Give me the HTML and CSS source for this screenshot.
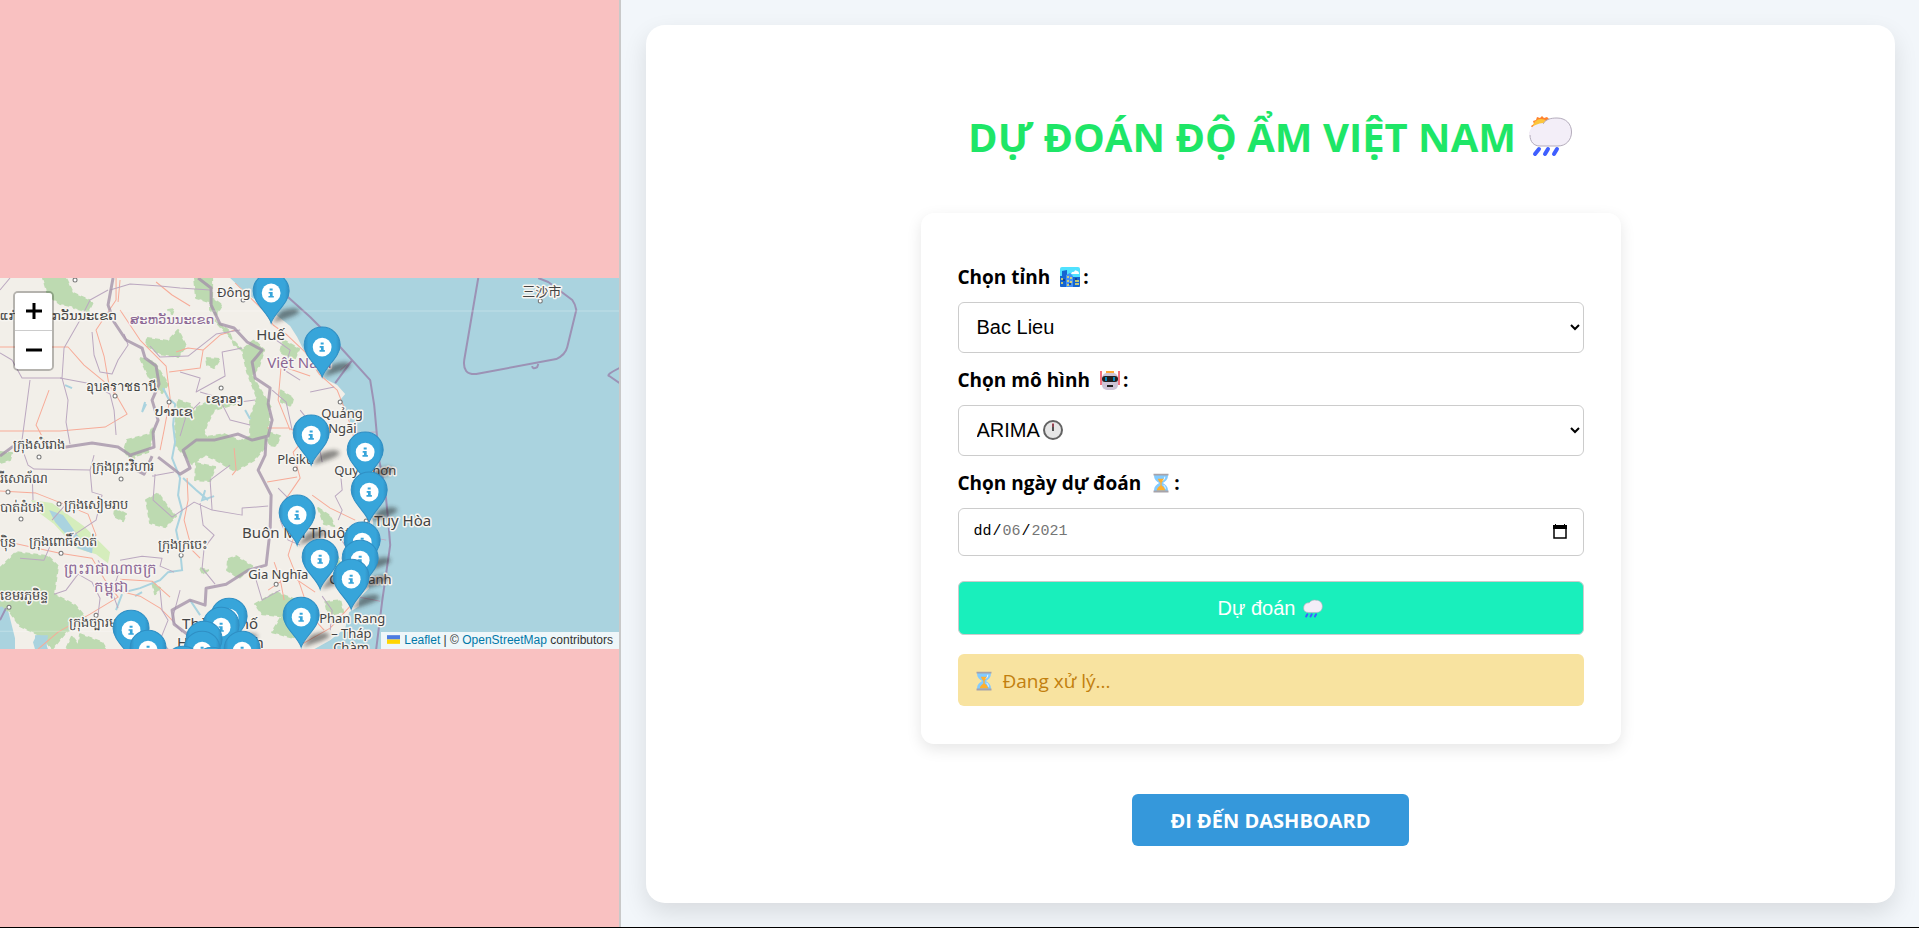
FILE: index.html
```html
<!DOCTYPE html>
<html lang="vi">
<head>
<meta charset="utf-8">
<meta name="viewport" content="width=device-width, initial-scale=1">
<title>Dự đoán độ ẩm Việt Nam</title>
<link rel="stylesheet" href="styles.css">
</head>
<body>
<svg class="sprites" aria-hidden="true">
  <defs>
    <linearGradient id="pinFill" x1="0" y1="0" x2="1" y2="0">
      <stop offset="0" stop-color="#318fc2"/><stop offset=".12" stop-color="#37a5da"/><stop offset=".88" stop-color="#37a5da"/><stop offset="1" stop-color="#318fc2"/>
    </linearGradient>
    <filter id="soft" x="-30%" y="-60%" width="160%" height="220%"><feGaussianBlur stdDeviation="2"/></filter>
    <symbol id="rain" viewBox="0 0 32 30">
      <path d="M1 14C1 8 4 5 10 5 13 1 17 0 21 1 27 1 31 5 31 11 31 17 27 20.500 22 20.500H9C4 20.500 1 18 1 14Z" fill="#f3eef8" stroke="#b4acbc" stroke-width="1"/>
      <path d="M7 23.500 5 27M14 23.500 12 27M21 23.500 19 27" stroke="#3f5fff" stroke-width="3.200" stroke-linecap="round"/>
    </symbol>
    <symbol id="hourglass" viewBox="0 0 32 32">
      <path d="M5 3h22v3c0 4-4 8-8 10 4 2 8 6 8 10v3H5v-3c0-4 4-8 8-10-4-2-8-6-8-10z" fill="#83cbff"/>
      <path d="M11 9h10c-1 3-3 5-4 6v5c3 2 5 4 6 8H9c1-4 3-6 6-8v-5c-2-1-3-3-4-6z" fill="#ffb02e"/>
      <path d="M22 6c0 3-1 4-3 6M20 19c2 2 3 4 3 6" stroke="#fff" stroke-width="1.500" fill="none"/>
      <path d="M4 1h24v3H4zM4 28h24v3H4z" fill="#a6a3aa"/>
    </symbol>
    <symbol id="pin" viewBox="-20 -22 70 56" overflow="visible">
      <path d="M1 30 10 18Q24 13 28 17T1 30Z" fill="#222" opacity=".5" filter="url(#soft)"/>
      <path d="M0 30C-3 20-18 10-18-2A18 18 0 0 1 18-2C18 10 3 20 0 30Z" fill="url(#pinFill)" stroke="#2f8fc4" stroke-width="1"/>
      <circle r="9.400" fill="#fff"/>
      <path d="M-1.500-4.500h3v2h-3zM-2.500-1h4v4h1.200v1.600h-5.400V3h1.500V.6h-1.300z" fill="#37a5da"/>
    </symbol>
  </defs>
</svg>

<div class="page">
  <section class="map-panel" aria-label="Bản đồ">
    <div class="map">
      <svg class="map-canvas" viewBox="0 278 619 371" preserveAspectRatio="xMinYMin slice" role="img" aria-label="Bản đồ Việt Nam">
        <rect y="278" width="619" height="371" fill="#aad3df"/>
        <path class="land" d="M0 278H230L248 295 262 304 280 318 290 326 297 337 305 353 317 372 327 380 337 385 345 394 340 400 347 413 354 433 357 450 366 465 367 490 373 522 371 545 365 570 369 588 359 598 359 606 349 612 345 628 330 640 314 649H48L40 628 33 642 35 649H15V638L8 610 0 600Z"/>
        <g class="forest">
          <path d="M43 278 66 278 73 293 89 300 80 308 60 304 48 295ZM78 302 93 302 88 312 74 308ZM147 338 168 341 178 330 186 346 178 357 160 354 146 345ZM194 278 212 278 212 303 196 298ZM210 297 222 305 216 315 210 310ZM212 318 228 330 234 345 242 350 254 340 264 350 259 366 252 376 264 396 271 408 257 398 247 372 242 350ZM140 358 154 362 168 384 162 393 150 380ZM178 400 190 404 202 427 212 450 192 464 176 446 175 425ZM206 358 220 359 214 368 207 365ZM258 395 268 400 269 420 266 444 250 449 250 418ZM196 408 215 398 235 404 214 410 207 424 202 437 191 425ZM200 438 224 434 240 441 260 432 265 447 254 460 235 471 216 460 190 448ZM127 440 150 434 152 427 154 432 148 452 135 456 132 463 124 450ZM0 452 12 453 10 460 0 463ZM196 463 215 467 210 481 195 480ZM146 500 158 493 170 510 176 516 165 527 150 523ZM115 508 126 514 123 521 114 516ZM228 559 236 556 252 566 239 578 227 570ZM0 568 16 552 48 556 58 566 54 594 75 605 88 620 66 632 52 649 42 636 20 626 10 612 0 605ZM80 634 102 642 106 649H78ZM255 604 276 592 296 600 304 607 280 616 262 614ZM268 432 280 436 276 446 269 445ZM276 280 285 295 277 300ZM318 508 330 516 334 526 324 524ZM336 555 342 564 338 574 332 560ZM282 615 300 620 294 638 272 632ZM325 602 340 600 343 612 328 615ZM283 340 299 349 294 360 280 352Z"/>
          <path d="M280 390 293 398 291 406 281 402ZM200 568 208 570 203 574ZM152 582 160 588 155 594ZM72 636 66 649 82 649ZM168 310 174 309 172 314ZM348 556 352 567 346 566ZM262 300 272 306 266 312Z"/>
        </g>
        <path d="M31 500 52 503 84 526 110 552 108 563 96 554 76 548 54 524 38 512Z" fill="#d5edbc"/>
        <path d="M49 510 63 515 79 537 93 545 92 553 78 548 66 534 55 522ZM35 635 48 635 46 649H35Z" fill="#aad3df"/>
        <g class="river">
          <path d="M163 388 168 398 175 404 173 425 175 442 172 458 180 478 178 495 182 510 176 530 180 550 182 570 168 572 160 580 140 588 124 592"/>
          <path d="M145 402 142 412 146 404M183 478 196 490 208 500M205 490 202 500 214 496M245 410 250 419M65 385 72 388M122 594 116 610M190 600 200 615M142 592 135 596"/>
        </g>
        <g class="road">
          <path d="M0 347H68L84 365 112 388 127 414 105 427 60 431H0M116 278 116 300 96 330 104 356 109 385 115 395M49 390 36 425 44 440M120 310 140 340 166 366 170 398 164 430 160 450"/>
          <path d="M169 372 200 368 203 350 220 335 235 330M203 350 188 348 176 352M156 282 172 295 190 306M118 302 120 280M0 491 36 493 64 504 88 514 96 535 88 543M0 540 60 553 92 558 105 580 118 597 90 614 58 632 38 649"/>
          <path d="M187 478 188 500 184 520 192 550 200 558M116 590 140 596 160 608 172 620M120 579 152 581 170 597M235 283 265 312 273 325 287 335 305 352 319 374 337 390 348 418 355 442 362 480 371 512 362 545 360 580 350 606 330 628 300 645"/>
          <path d="M267 428 289 428 306 437 293 452 300 478 285 500 296 530 288 555 300 585 310 615 324 630M290 430 278 400 281 366 310 376M267 482 297 477M234 448 236 470 232 475M274 562 280 579 284 600M268 590 290 575 315 592M312 495 330 508 355 520"/>
        </g>
        <g class="admin">
          <path d="M0 290 10 278M0 353 12 360 22 378H62L64 348 80 320 90 300 108 290M62 378 68 400 66 422 70 444M92 332 94 355 100 372 112 374 118 360 128 345 124 334M30 380 26 410 22 440M110 290 130 284 160 286 180 288 210 290M150 346 160 357 188 356 216 334 240 330"/>
          <path d="M60 378 92 384 110 394 114 410 116 435M180 372 200 378 196 392 225 376 222 352 242 348M200 402 186 416 180 436M200 392 220 398 240 402 255 400M22 448 28 465 34 469 90 470 92 492 102 495 96 520 75 534 50 546 44 560 20 558"/>
          <path d="M32 470 33 500M90 470 94 455M155 474 153 500 172 517 194 502 212 510 242 515 242 508 268 506M152 476 174 472M212 510 210 480 230 465M200 503 203 525 214 535 204 548 202 568 215 584M98 560 104 570 118 575 112 592 118 608M120 560 142 556 162 558 160 566 174 572M54 594 66 590 78 574 92 582 100 598 98 615M160 590 162 610 168 620 160 640 168 649M66 504 52 520M180 590 172 620 182 632"/>
          <path d="M250 425 230 420 222 404M276 340 290 350 284 370 300 380M272 390 286 402 292 430M310 392 334 387M340 370 352 360M300 410 316 430 322 462M340 470 342 490 335 496 342 510 338 520M278 488 290 500 300 495M280 520 288 540 300 545M335 530 348 550 372 540M256 580 262 600 280 590M322 596 332 610 330 630M355 433 376 432M370 537 386 540M360 597 380 601"/>
        </g>
        <g class="border">
          <path d="M113 278 108 305 114 322 126 340 142 348 145 358 156 366 159 384 152 400 158 420 153 432 154 447 130 455 118 447 92 443 66 447 40 444 12 447 0 456"/>
          <path d="M198 278 211 288 211 305 220 324 234 328 247 342 262 350 252 362 255 378 270 388 268 404 272 420 268 436 252 440 238 434 214 440 196 440 183 450 190 468 180 474 158 457"/>
          <path d="M266 438 265 455 258 470 271 495 270 530 266 565 248 570 226 584 206 588 205 605 190 600 172 610 174 624 190 636M130 455 136 470 144 474 152 456"/>
        </g>
        <g class="sea-border">
          <path d="M280 290 310 317 340 347 370 380 374 405 379 460 385 490 388 520 390 545 385 580 382 601 376 649M335 383 352 360M478 278 464 360Q462 375 476 374L556 359Q565 355 567 347L576 310Q575 304 572 300L548 282 538 278M532 366Q532 370 537 367L538 364M619 368Q605 375 609 376L619 383M0 620 6 608"/>
        </g>
        <path class="tile-seam" d="M0 311H619M0 631H140"/>
        <g class="dots">
          <circle cx="75" cy="280" r="2"/><circle cx="109" cy="315" r="2"/><circle cx="115" cy="396" r="2"/><circle cx="169" cy="402" r="2"/><circle cx="221" cy="388" r="2"/><circle cx="39" cy="457" r="2"/><circle cx="121" cy="479" r="2"/><circle cx="8" cy="492" r="2"/><circle cx="59" cy="504" r="2"/><circle cx="21" cy="519" r="2"/><circle cx="61" cy="553" r="2"/><circle cx="181" cy="555" r="2"/><circle cx="9" cy="607" r="2"/><circle cx="96" cy="615" r="2"/><circle cx="276" cy="584" r="2"/><circle cx="295" cy="469" r="2"/><circle cx="340" cy="402" r="2"/><circle cx="540" cy="301" r="2"/><circle cx="243" cy="300" r="2"/><circle cx="366" cy="521" r="2"/>
        </g>
        <g class="place">
          <text x="0" y="320">ແກ່</text><text x="52" y="320">ກວັນນະເຂດ</text>
          <text x="86" y="391">อุบลราชธานี</text><text x="155" y="416">ປາກເຊ</text><text x="206" y="403">ເຊກອງ</text>
          <text x="13" y="449">ក្រុងសំរោង</text><text x="92" y="471">ក្រុងព្រះវិហារ</text><text x="0" y="483">រីសោភ័ណ</text><text x="64" y="509">ក្រុងសៀមរាប</text><text x="0" y="512">បាត់ដំបង</text><text x="0" y="547">ប៉ិន</text><text x="29" y="546">ក្រុងពោធិ៍សាត់</text><text x="158" y="549">ក្រុងក្រចេះ</text><text x="0" y="600">ខេមរភូមិន្ទ</text><text x="69" y="627">ក្រុងច្បារមន</text>
          <text x="217" y="297">Đông</text><text x="321" y="418">Quảng</text><text x="328" y="433">Ngãi</text><text x="277" y="464">Pleiku</text><text x="334" y="475">Quy Nhơn</text><text x="248" y="579">Gia Nghĩa</text><text x="329" y="584">Cam Ranh</text><text x="319" y="623">Phan Rang</text><text x="331" y="638">– Tháp</text><text x="333" y="652">Chàm</text><text x="522" y="296">三沙市</text>
        </g>
        <g class="place city">
          <text x="256" y="340">Huế</text><text x="242" y="538">Buôn Ma Thuột</text><text x="374" y="526">Tuy Hòa</text><text x="182" y="629">Thành phố</text><text x="177" y="648">Hồ Chí Minh</text>
        </g>
        <g class="place region">
          <text class="province" x="130" y="324">ສະຫວັນນະເຂດ</text><text x="267" y="368">Việt Nam</text><text x="64" y="574">ព្រះរាជាណាចក្រ</text><text x="94" y="592">កម្ពុជា</text>
        </g>
        <g class="pins">
          <use href="#pin" x="251" y="271" width="70" height="56"/>
          <use href="#pin" x="302" y="325" width="70" height="56"/>
          <use href="#pin" x="291" y="413" width="70" height="56"/>
          <use href="#pin" x="345" y="430" width="70" height="56"/>
          <use href="#pin" x="349" y="470" width="70" height="56"/>
          <use href="#pin" x="277" y="493" width="70" height="56"/>
          <use href="#pin" x="342" y="520" width="70" height="56"/>
          <use href="#pin" x="300" y="537" width="70" height="56"/>
          <use href="#pin" x="340" y="538" width="70" height="56"/>
          <use href="#pin" x="331" y="557" width="70" height="56"/>
          <use href="#pin" x="281" y="595" width="70" height="56"/>
          <use href="#pin" x="209" y="596" width="70" height="56"/>
          <use href="#pin" x="201" y="605" width="70" height="56"/>
          <use href="#pin" x="111" y="608" width="70" height="56"/>
          <use href="#pin" x="184" y="619" width="70" height="56"/>
          <use href="#pin" x="128" y="628" width="70" height="56"/>
          <use href="#pin" x="222" y="629" width="70" height="56"/>
          <use href="#pin" x="182" y="629" width="70" height="56"/>
          <use href="#pin" x="163" y="644" width="70" height="56"/>
          <use href="#pin" x="192" y="645" width="70" height="56"/>
        </g>
      </svg>
      <div class="zoom">
        <button type="button" aria-label="Phóng to"><svg viewBox="0 0 16 16"><path d="M8 0V16M0 8H16"/></svg></button>
        <button type="button" aria-label="Thu nhỏ"><svg viewBox="0 0 16 16"><path d="M0 8H16"/></svg></button>
      </div>
      <p class="attribution"><svg class="flag" viewBox="0 0 12 8" aria-hidden="true"><path fill="#4c7be1" d="M0 0h12v4H0z"/><path fill="#ffd500" d="M0 4h12v4H0z"/></svg><a href="#leaflet">Leaflet</a> | © <a href="#osm">OpenStreetMap</a> contributors</p>
    </div>
  </section>

  <main class="content">
    <div class="card">
      <h1 class="title">DỰ ĐOÁN ĐỘ ẨM VIỆT NAM
        <svg class="title-icon" viewBox="0 0 44 42" aria-hidden="true">
          <path d="M2 15 4 13 2 10 5 8 4 5 7 4 8 1 11 2 13 0 15 2 18 1 20 3 20 16 5 20Z" fill="#ff822d"/>
          <circle cx="12" cy="11" r="8" fill="#fcc53b"/>
          <path d="M1 19C1 12 6 9 14 8 17 3 22 2 28 2 37 2 42.500 8 42.500 16 42.500 24 37 30 29 30H11C5 30 1 26 1 19Z" fill="#f3eef8" stroke="#b4acbc"/>
          <path d="M1 19C1 12 6 9 14 8" fill="none" stroke="#f3eef8" stroke-width="2"/>
          <path d="M10 33 6 38M19 33 16 38M28 33 25 38" stroke="#3f5fff" stroke-width="4" stroke-linecap="round"/>
        </svg>
      </h1>

      <form class="form">
        <label class="label" for="province">Chọn tỉnh
          <svg class="emoji" viewBox="0 0 20 20" aria-hidden="true">
            <rect width="20" height="20" rx="2" fill="#50e2ff"/>
            <path d="M11 7q1-3 3-2 1-3 3-1 2 0 2 3z" fill="#fff"/>
            <path d="M2 4 7 3V20H1Q0 20 0 19V9h2zM13 10h7v9q0 1-1 1h-6z" fill="#1565d0"/><path d="M6 8l4-2 3 3v11H6z" fill="#4591f5"/>
            <path d="M8 9v2M11 10v2M8 13v2M11 14v2M8 17v2M2 11v2M2 15v2M15 14h4M15 17h4" stroke="#f6e45a" stroke-width="1.500"/><path d="M4 12v2M10 16v2M16 11v2" stroke="#173c75" stroke-width="1.500"/>
          </svg>:</label>
        <select class="control" id="province"><option>Bac Lieu</option></select>

        <label class="label" for="model">Chọn mô hình
          <svg class="emoji" viewBox="0 0 20 20" aria-hidden="true">
            <path d="M1 1V15M19 1V15" stroke="#f04455" stroke-width="1.500"/><path d="M6 1h8v4H6z" fill="#ffa93a"/>
            <rect x="2" y="3" width="16" height="17" rx="5" fill="#cdc4d6"/><rect x="2" y="6" width="16" height="6" rx="3" fill="#212121"/>
            <path d="M6 7v4M14 7v4" stroke="#00a6ed" stroke-width="1.500"/><path d="M7 16h6" stroke="#212121" stroke-width="2"/>
          </svg>:</label>
        <div class="field">
          <select class="control" id="model"><option>ARIMA</option></select>
          <svg class="clock" viewBox="0 0 20 20" aria-hidden="true"><circle cx="10" cy="10" r="9" fill="#e6e6e6" stroke="#636363" stroke-width="2"/><path d="M10 4v7" stroke="#212121" stroke-width="1.500"/><path d="M10 3v4" stroke="#ca3a55"/></svg>
        </div>

        <label class="label" for="day">Chọn ngày dự đoán
          <svg class="emoji" aria-hidden="true"><use href="#hourglass"/></svg>:</label>
        <div class="control date">
          <input class="part day" id="day" value="dd" aria-label="Ngày"><span>/</span><input class="part" value="06" aria-label="Tháng"><span>/</span><input class="part year" value="2021" aria-label="Năm">
          <button class="picker" type="button" aria-label="Mở lịch"><svg viewBox="0 0 14 15"><path d="M1 2H13V14H1Z" fill="none" stroke="#000" stroke-width="1.500"/><path d="M0 1H14V5H0ZM2 0h1v2H2zM11 0h1v2h-1z"/></svg></button>
        </div>

        <button class="submit" type="button">Dự đoán <svg class="emoji" aria-hidden="true"><use href="#rain"/></svg></button>
        <p class="status" role="status"><svg class="emoji" aria-hidden="true"><use href="#hourglass"/></svg>Đang xử lý...</p>
      </form>

      <a class="dashboard" href="#dashboard">ĐI ĐẾN DASHBOARD</a>
    </div>
  </main>
</div>
</body>
</html>
```
FILE: styles.css
```css
* { box-sizing: border-box; }

body {
  margin: 0;
  font-family: "Open Sans", "Noto Sans", sans-serif;
  font-size: 20px;
  color: #000;
}

.sprites { position: absolute; width: 0; height: 0; }

.page {
  display: grid;
  grid-template-columns: 621fr 1298fr;
  min-height: 100vh;
  border-bottom: 1px solid #000;
  background: #f2f6fa;
}

/* Map */
.map-panel {
  display: flex;
  align-items: center;
  background: #f9c1c1;
  border-right: 2px solid #c9c9c9;
}
.map {
  position: relative;
  width: 100%;
  height: 40vh;
  overflow: hidden;
  background: #aad3df;
}
.map-canvas { display: block; width: 100%; height: 100%; }
.land { fill: #f2efe9; }
.forest { fill: #bddab1; stroke: #bddab1; stroke-width: 2; stroke-linejoin: round; stroke-dasharray: 5 3; }
.river { fill: none; stroke: #aad3df; stroke-width: 2; }
.road { fill: none; stroke: #f7ab98; stroke-width: 1; stroke-linejoin: round; }
.admin { fill: none; stroke: #bba8c0; stroke-width: 1; stroke-linejoin: round; }
.border { fill: none; stroke: #a594aa; stroke-width: 3; stroke-linejoin: round; opacity: .8; }
.sea-border { fill: none; stroke: #9c92b5; stroke-width: 2; stroke-linejoin: round; }
.tile-seam { stroke: #fff; stroke-width: 1; opacity: .25; }
.dots { fill: #fff; stroke: #777; }
.place {
  font-family: "Noto Sans", "DejaVu Sans", "Noto Sans CJK SC", sans-serif;
  font-size: 13px;
  fill: #444;
  stroke: #f7f5f1;
  stroke-width: 3px;
  stroke-linejoin: round;
  paint-order: stroke;
}
.city { font-size: 15px; }
.region { font-size: 15px; fill: #8a6594; }
.province { font-size: 13px; }

.zoom {
  position: absolute;
  top: 13px;
  left: 13px;
  width: 41px;
  border: 2px solid rgba(0, 0, 0, .25);
  border-radius: 5px;
  background-clip: padding-box;
}
.zoom button {
  display: grid;
  place-items: center;
  width: 100%;
  height: 38px;
  padding: 0;
  border: 0;
  background: #fff;
}
.zoom button:first-child { border-bottom: 1px solid #ccc; border-radius: 3px 3px 0 0; }
.zoom button:last-child { border-radius: 0 0 3px 3px; }
.zoom svg { width: 16px; height: 16px; stroke: #000; stroke-width: 3; }

.attribution {
  position: absolute;
  right: 0;
  bottom: 0;
  margin: 0;
  padding: 0 6px;
  background: rgba(255, 255, 255, .8);
  color: #333;
  font: 12px/17px "Liberation Sans", Arial, sans-serif;
}
.attribution a { color: #0078a8; text-decoration: none; }
.flag { width: 13px; height: 9px; margin-right: 4px; }

/* Prediction card */
.content { display: flex; padding: 25px 24px 24px 25px; }
.card {
  flex: 1;
  display: flex;
  flex-direction: column;
  align-items: center;
  justify-content: center;
  padding: 20px;
  background: #fff;
  border-radius: 19px;
  box-shadow: 0 10px 25px rgba(0, 0, 0, .11);
}
.title {
  display: flex;
  align-items: center;
  gap: 13px;
  margin: 0;
  padding: 24px 0 46px;
  color: #1ee667;
  font-size: 40px;
  line-height: 60px;
}
.title-icon { width: 44px; height: 42px; }

.form {
  display: flex;
  flex-direction: column;
  width: 100%;
  max-width: 700px;
  padding: 37px 37px 38px;
  border-radius: 13px;
  background: #fff;
  box-shadow: 0 5px 15px rgba(0, 0, 0, .1);
}
.label {
  display: flex;
  align-items: center;
  padding: 14px 0 11px;
  font-size: 19px;
  font-weight: 700;
  line-height: 27px;
}
.emoji { width: 20px; height: 20px; }
.label .emoji { margin: 0 3px 0 10px; }
.field { position: relative; }
.control {
  width: 100%;
  height: 51px;
  padding: 0 14px;
  border: 1px solid #ccc;
  border-radius: 6px;
  background: #fff;
  color: #000;
  font: 20px "Liberation Sans", Arial, sans-serif;
}
select.control { padding: 0 0 0 14px; }
.clock { position: absolute; top: 15px; left: 85px; width: 20px; height: 20px; }

.date {
  display: flex;
  align-items: center;
  height: 48px;
  font: 15px "Liberation Mono", monospace;
}
.part {
  width: 20px;
  padding: 0 1px;
  border: 0;
  background: none;
  color: #757575;
  font: inherit;
}
.part.day { color: #000; }
.part.year { width: 40px; }
.picker { display: grid; margin-left: auto; padding: 0 2px; border: 0; background: none; }
.picker svg { width: 14px; height: 15px; }

.submit {
  display: flex;
  align-items: center;
  justify-content: center;
  gap: 8px;
  height: 54px;
  margin-top: 25px;
  padding: 2px 0 0;
  border: 1px solid #ccc;
  border-radius: 6px;
  background: #19efbc;
  color: #fff;
  font: 20px "Liberation Sans", Arial, sans-serif;
}
.status {
  display: flex;
  align-items: center;
  gap: 9px;
  margin: 19px 0 0;
  padding: 14px 16px 11px;
  border-radius: 6px;
  background: #f8e3a0;
  color: #c27f0e;
  font-size: 19px;
  line-height: 27px;
}

.dashboard {
  margin-top: 50px;
  padding: 13px 38px 12px;
  border-radius: 6px;
  background: #3598db;
  color: #fff;
  font-size: 20px;
  font-weight: 700;
  line-height: 27px;
  text-decoration: none;
}
```
